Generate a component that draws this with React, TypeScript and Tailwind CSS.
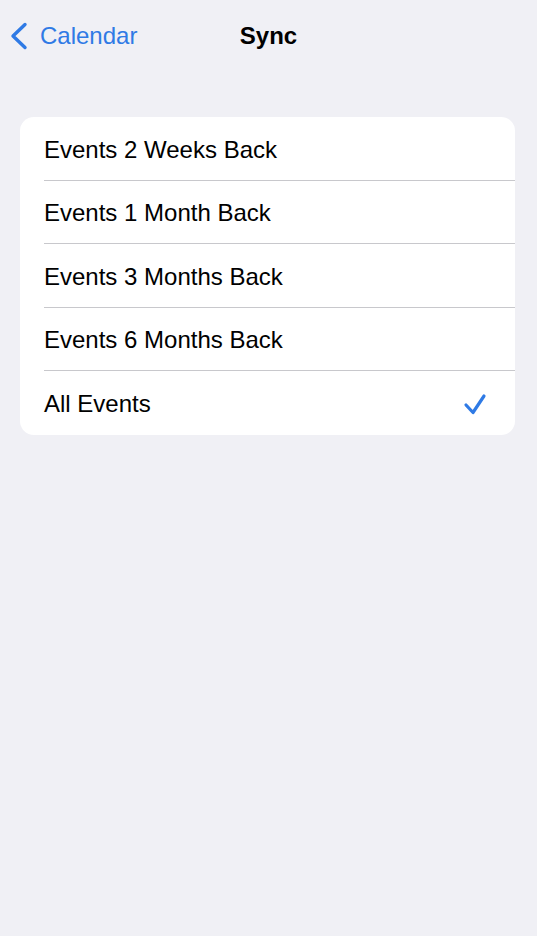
import React from 'react';

const options = [
  'Events 2 Weeks Back',
  'Events 1 Month Back',
  'Events 3 Months Back',
  'Events 6 Months Back',
  'All Events',
];

const App = () => {
  const selected = 'All Events';

  return (
    <div
      className="min-h-[936px] w-full bg-[#f0f0f5]"
      style={{ fontFamily: '"Liberation Sans", Arial, sans-serif' }}
    >
      {/* Nav bar */}
      <div className="relative flex h-[72px] items-center">
        <button className="flex items-center pl-[10px] text-[#2f7ae5]">
          <svg width="18" height="28" viewBox="0 0 18 28" className="mr-[12px]">
            <path
              d="M15 2.5 L3 14 L15 25.5"
              fill="none"
              stroke="currentColor"
              strokeWidth="3.4"
              strokeLinecap="round"
              strokeLinejoin="round"
            />
          </svg>
          <span className="text-[24px] leading-none">Calendar</span>
        </button>
        <div className="absolute left-1/2 -translate-x-1/2 text-[24px] font-bold leading-none text-black">
          Sync
        </div>
      </div>

      {/* Options */}
      <div className="ml-[20px] mr-[22px] mt-[45px] overflow-hidden rounded-[14px] bg-white">
        {options.map((label, i) => (
          <div key={label} className="pl-[24px]">
            <div
              className={`flex h-[63.5px] items-center justify-between pr-[28px] ${
                i < options.length - 1 ? 'border-b border-[#c8c8cc]' : ''
              }`}
            >
              <span className="pt-[3px] text-[24px] text-black">{label}</span>
              {label === selected && (
                <svg width="24" height="24" viewBox="0 0 24 24" className="mt-[2px]">
                  <path
                    d="M3 13 L10 20.5 L21 4"
                    fill="none"
                    stroke="#2f7ae5"
                    strokeWidth="3.2"
                    strokeLinecap="round"
                    strokeLinejoin="round"
                  />
                </svg>
              )}
            </div>
          </div>
        ))}
      </div>
    </div>
  );
};

export default App;
